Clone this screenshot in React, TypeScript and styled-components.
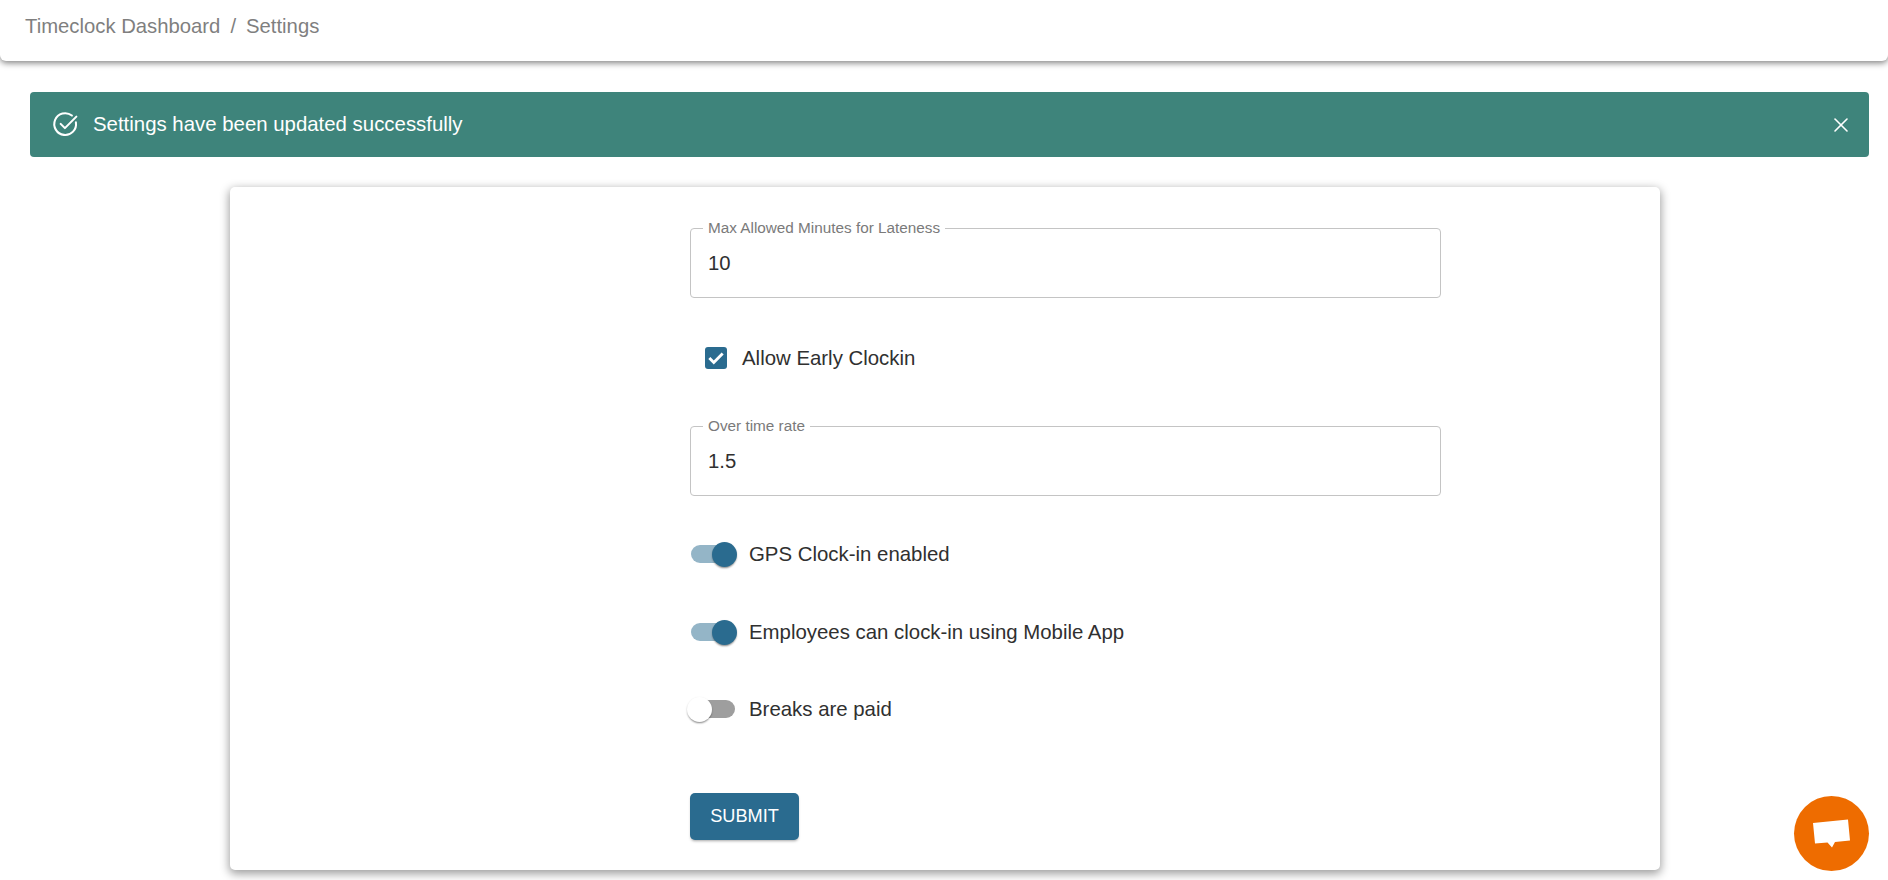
import styled, { createGlobalStyle } from 'styled-components';
import { X } from 'lucide-react';

const primary = '#2a6b8f';

const GlobalStyle = createGlobalStyle`
    html, body {
        margin: 0;
        padding: 0;
        background: #fff;
        font-family: "Liberation Sans", Arial, sans-serif;
        overflow: hidden;
    }
`
const Page = styled.div`
    width: 1888px;
    height: 880px;
    position: relative;
    overflow: hidden;
`
const Header = styled.header`
    height: 61px;
    box-sizing: border-box;
    padding: 15px 25px 0;
    background: #fff;
    border-radius: 0 0 6px 6px;
    box-shadow: 0 2px 6px 0 rgba(0, 0, 0, 0.5);
    font-size: 20.3px;
    line-height: 23px;
    color: #7f7f7f;
    display: flex;
    gap: 10px;
`
const Alert = styled.div`
    margin: 31px 19px 0 30px;
    height: 65px;
    box-sizing: border-box;
    padding: 0 16px 0 21px;
    background: #3e847b;
    border-radius: 4px;
    color: #fff;
    font-size: 20.4px;
    display: flex;
    align-items: center;
    gap: 13px;
`
const AlertText = styled.span`
    flex: 1;
`
const Card = styled.main`
    margin: 30px 0 0 230px;
    width: 1430px;
    height: 683px;
    box-sizing: border-box;
    padding: 41px 0 0 460px;
    background: #fff;
    border-radius: 5px;
    box-shadow: 0 3px 10px 1px rgba(0, 0, 0, 0.38);
`
const Form = styled.form`
    width: 751px;
    display: flex;
    flex-direction: column;
    align-items: flex-start;
`
const Field = styled.fieldset<{ $after: number }>`
    width: 100%;
    height: 76px;
    box-sizing: border-box;
    margin: -6px 0 ${p => p.$after}px;
    padding: 0 12px;
    border: 1px solid #c4c4c4;
    border-radius: 4px;
`
const Legend = styled.legend`
    padding: 0 5px;
    font-size: 15.3px;
    line-height: 12px;
    color: #7a7a7a;
`
const FieldValue = styled.div`
    font-size: 20.3px;
    line-height: 24px;
    padding: 17px 0 0 5px;
    color: #303030;
`
const CheckRow = styled.label`
    display: flex;
    align-items: center;
    gap: 15px;
    margin: 0 0 56px 15px;
    height: 24px;
    font-size: 20.4px;
    color: #303030;
`
const CheckBox = styled.span`
    width: 22px;
    height: 22px;
    border-radius: 3px;
    background: ${primary};
    display: flex;
    align-items: center;
    justify-content: center;
`
const ToggleRow = styled.label<{ $after: number }>`
    display: flex;
    align-items: center;
    gap: 14px;
    height: 30px;
    margin-bottom: ${p => p.$after}px;
    font-size: 20.4px;
    color: #303030;
`
const Track = styled.span<{ $on: boolean }>`
    position: relative;
    display: block;
    width: ${p => (p.$on ? 44 : 40)}px;
    height: 18px;
    margin-left: ${p => (p.$on ? 1 : 5)}px;
    border-radius: 9px;
    background: ${p => (p.$on ? '#94b5c7' : '#9e9e9e')};
`
const Thumb = styled.span<{ $on: boolean }>`
    position: absolute;
    top: -3px;
    ${p => (p.$on ? 'right: -2px;' : 'left: -8px;')}
    width: 25px;
    height: 25px;
    border-radius: 50%;
    background: ${p => (p.$on ? primary : '#fff')};
    box-shadow: 0 2px 2px -1px rgba(0, 0, 0, 0.3), 0 1px 2px 0 rgba(0, 0, 0, 0.22);
`
const Submit = styled.button`
    width: 109px;
    height: 47px;
    padding: 0;
    border: 0;
    border-radius: 5px;
    background: ${primary};
    color: #fff;
    font-family: inherit;
    font-size: 18.2px;
    box-shadow: 0 2px 3px -1px rgba(0, 0, 0, 0.35);
`
const Chat = styled.button`
    position: absolute;
    left: 1794px;
    top: 796px;
    width: 75px;
    height: 75px;
    padding: 0;
    border: 0;
    border-radius: 50%;
    background: #ee6c00;
    display: flex;
    align-items: center;
    justify-content: center;
`

function Toggle({ on, label, after }: { on: boolean; label: string; after: number }) {
    return (
        <ToggleRow $after={after}>
            <Track $on={on}><Thumb $on={on} /></Track>
            {label}
        </ToggleRow>
    );
}

export default function App() {
    return (
        <Page>
            <GlobalStyle />
            <Header>
                <span>Timeclock Dashboard</span>
                <span>/</span>
                <span>Settings</span>
            </Header>
            <Alert>
                <svg width="29" height="29" viewBox="0 0 24 24" fill="none" stroke="#fff" strokeWidth="1.7" strokeLinecap="round" strokeLinejoin="round">
                    <path d="M20.6 10.2a9 9 0 1 1-3.3-5.6" />
                    <path d="M8 11.5l3.5 3.5L21 5.5" />
                </svg>
                <AlertText>Settings have been updated successfully</AlertText>
                <X size={24} strokeWidth={1.6} />
            </Alert>
            <Card>
                <Form>
                    <Field $after={48}>
                        <Legend>Max Allowed Minutes for Lateness</Legend>
                        <FieldValue>10</FieldValue>
                    </Field>
                    <CheckRow>
                        <CheckBox>
                            <svg width="20" height="20" viewBox="0 0 18 18" fill="none" stroke="#fff" strokeWidth="2.6">
                                <path d="M3 9l4 4 8-8" />
                            </svg>
                        </CheckBox>
                        Allow Early Clockin
                    </CheckRow>
                    <Field $after={43}>
                        <Legend>Over time rate</Legend>
                        <FieldValue>1.5</FieldValue>
                    </Field>
                    <Toggle on label="GPS Clock-in enabled" after={48} />
                    <Toggle on label="Employees can clock-in using Mobile App" after={47} />
                    <Toggle on={false} label="Breaks are paid" after={69} />
                    <Submit type="button">SUBMIT</Submit>
                </Form>
            </Card>
            <Chat>
                <svg width="38" height="32" viewBox="0 0 38 32" fill="#fff">
                    <path d="M0 5L35 1.500L37 22.500L22 24L19 29.500L14.500 24.500L2 25.500Z" />
                </svg>
            </Chat>
        </Page>
    );
}
